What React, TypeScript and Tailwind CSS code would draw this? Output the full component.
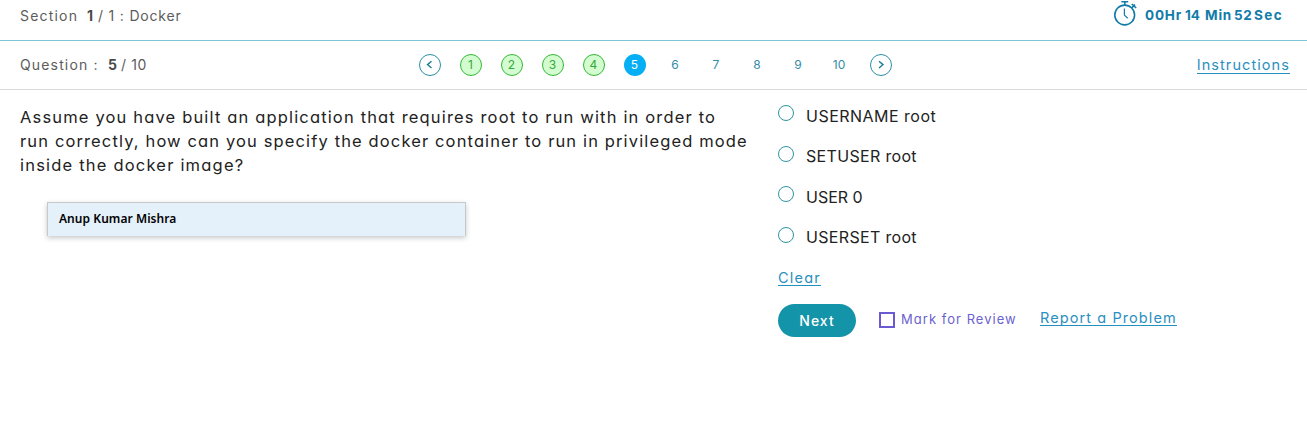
import React from "react";

const done = [1, 2, 3, 4];
const upcoming = [6, 7, 8, 9, 10];
const options = [
  { label: "USERNAME root", row: "h-10", dot: "mt-px", track: "tracking-[0.48px]" },
  { label: "SETUSER root", row: "h-[41px]", dot: "mt-[2px]", track: "tracking-[0.33px]" },
  { label: "USER 0", row: "h-10", dot: "mt-px", track: "tracking-[0px]" },
  { label: "USERSET root", row: "h-[41px]", dot: "mt-[2px]", track: "tracking-[0.33px]" },
];

function Arrow({ d }: { d: string }) {
  return (
    <button className="flex size-[22px] items-center justify-center rounded-full border border-[#2b8fa3]">
      <svg width="20" height="20" viewBox="0 0 20 20" fill="none" stroke="#1c7f96" strokeWidth="1.4">
        <path d={d} />
      </svg>
    </button>
  );
}

function Stopwatch() {
  return (
    <svg width="24" height="27" viewBox="0 0 24 27" fill="none" stroke="#127ba8" strokeWidth="1.6">
      <circle cx="10.7" cy="15" r="9.9" />
      <path d="M7.4 1.7h6.8M10.8 2v3.2M18 7.6l3-3M17.8 4l4.4 4" />
      <path strokeWidth="1.2" d="M10.4 8.5v6.6l3.3 3.2" />
    </svg>
  );
}

export default function App() {
  return (
    <div className="flex h-[444px] w-[1307px] flex-col overflow-hidden bg-white font-['Inter',sans-serif] font-normal whitespace-nowrap text-[#222222] [font-feature-settings:'cv11']">
      <header className="flex h-[41px] shrink-0 items-start justify-between border-b border-[#7cc4d6] pr-[24px] pl-5 text-[14px] leading-5 text-[#5c5c5c]">
        <div className="flex pt-[6px]">
          <span className="w-[67px] tracking-[1.2px]">Section</span>
          <span className="w-[11px] font-bold text-[#4a4a4a]">1</span>
          <span className="tracking-[0.8px]">/ 1 : Docker</span>
        </div>
        <div className="flex text-[#127ba8]">
          <Stopwatch />
          <div className="flex pt-[5px] pl-[7px] text-[13.5px] font-bold">
            <span className="w-[40px] tracking-[0.8px]">00Hr</span>
            <span className="w-[20px] tracking-[0px]">14</span>
            <span className="w-[29px] tracking-[0.8px]">Min</span>
            <span className="w-[20px] tracking-[0.7px]">52</span>
            <span className="w-[29px] tracking-[1.4px]">Sec</span>
          </div>
        </div>
      </header>

      <nav className="flex h-[49px] shrink-0 items-center border-b border-[#d9d9d9] pr-[17px] pl-5 text-[14px] text-[#5c5c5c]">
        <div className="flex w-[399px] pb-[2px]">
          <span className="w-[88px] tracking-[1.15px]">Question :</span>
          <span className="w-[13px] font-bold text-[#4a4a4a]">5</span>
          <span className="tracking-[0.6px]">/ 10</span>
        </div>
        <div className="flex gap-[19px] text-[12px]">
          <Arrow d="M11.5 6.2 7.5 9.6l4 3.4" />
          {done.map((n) => (
            <span key={n} className="flex size-[22px] items-center justify-center rounded-full border border-[#35b935] bg-[#d3fcd0] pr-px text-[#35a93b]">
              {n}
            </span>
          ))}
          <span className="flex size-[22px] items-center justify-center rounded-full bg-[#06aef3] pr-px text-white">5</span>
          {upcoming.map((n) => (
            <span key={n} className="flex size-[22px] items-center justify-center pr-[2px] text-[#358ba6]">
              {n}
            </span>
          ))}
          <Arrow d="m8 6.2 4 3.4L8 13" />
        </div>
        <a className="ml-auto border-b border-[#2490bd] text-[14.5px] leading-[16px] tracking-[1.08px] text-[#2b8fc0]">Instructions</a>
      </nav>

      <main className="flex">
        <section className="w-[778px] pt-[15px] pl-5">
          <div className="flex flex-col text-[16.5px] leading-6">
            <span className="tracking-[1.16px]">Assume you have built an application that requires root to run with in order to</span>
            <span className="tracking-[1.13px]">run correctly, how can you specify the docker container to run in privileged mode</span>
            <span className="tracking-[1.2px]">inside the docker image?</span>
          </div>
          <div className="mt-[25px] ml-[27px] flex h-[34px] w-[419px] items-center border border-b-0 border-[#c5c9cc] bg-[#e4f0fa] pb-[2px] pl-[11px] font-['Noto_Sans',sans-serif] text-[12px] font-semibold tracking-[0.06px] text-black shadow-[0_2px_5px_rgba(0,0,0,0.22)]">
            Anup Kumar Mishra
          </div>
        </section>

        <section className="pt-[14px]">
          {options.map((o) => (
            <label key={o.label} className={`flex items-start ${o.row}`}>
              <span className={`size-4 rounded-full border border-[#2b96a3] ${o.dot}`} />
              <span className={`pl-[12px] text-[16px] leading-6 ${o.track}`}>{o.label}</span>
            </label>
          ))}
          <a className="mt-[4px] block w-[43px] border-b border-[#2490bd] text-[14.5px] leading-[15px] tracking-[1.2px] text-[#2b8fc0]">Clear</a>
          <div className="mt-[18px] flex h-[33px] items-center">
            <button className="h-[33px] w-[78px] rounded-full bg-[#1394a8] pb-px text-[14px] font-medium tracking-[1px] text-white">Next</button>
            <span className="mb-[2px] ml-[23px] size-4 border-2 border-[#6b5bd0]" />
            <span className="ml-[6px] w-[139px] pb-[2px] text-[13px] tracking-[1.03px] text-[#6b62d0]">Mark for Review</span>
            <a className="mb-[5px] border-b border-[#2490bd] text-[14.5px] leading-[15px] tracking-[1.09px] text-[#2b8fc0]">Report a Problem</a>
          </div>
        </section>
      </main>
    </div>
  );
}
